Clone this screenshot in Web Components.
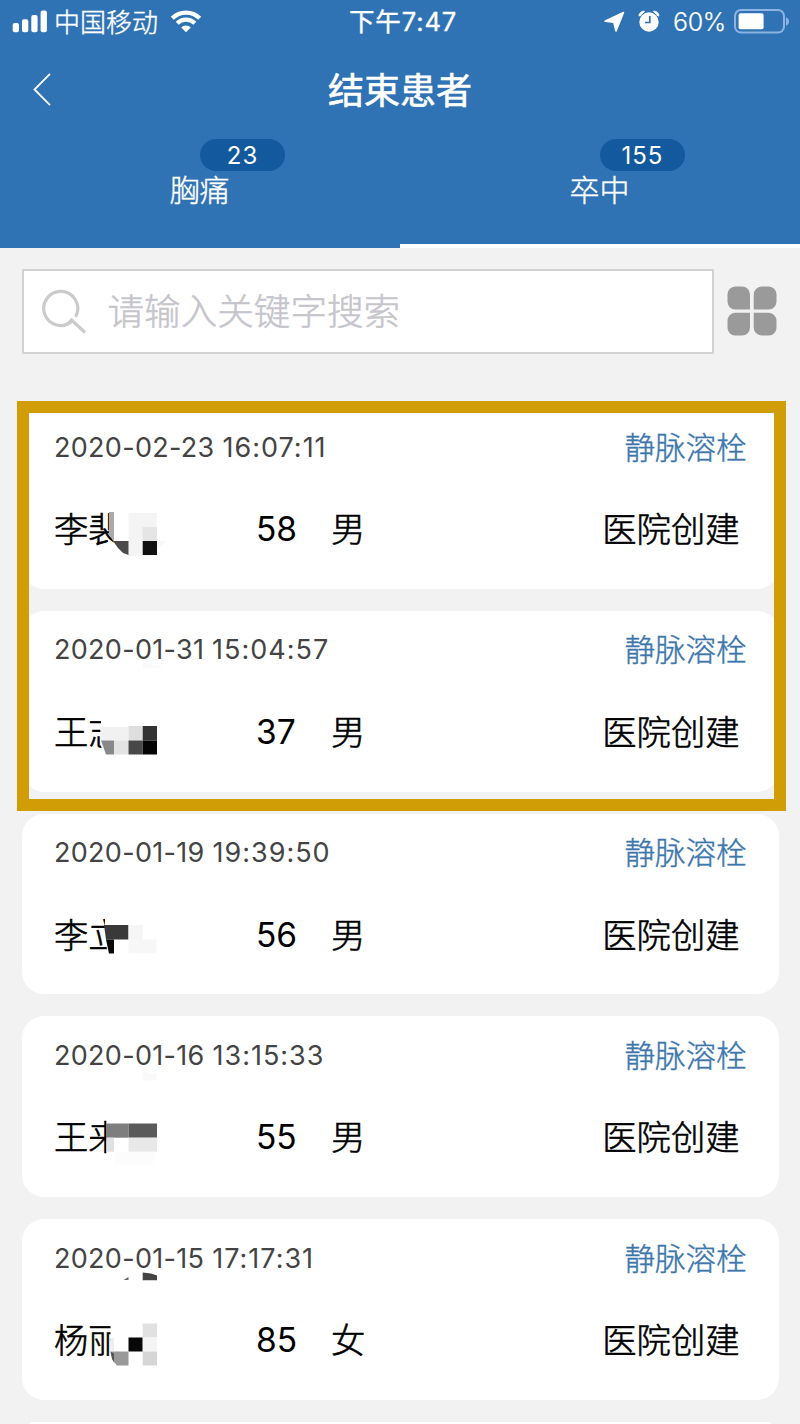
<!DOCTYPE html>
<html lang="zh-CN">
<head>
<meta charset="utf-8">
<title>结束患者</title>
<style>
    body {
        margin: 0;
        width: 800px;
        height: 1424px;
        overflow: hidden;
        background: #f2f2f2;
        font-family: Inter, "Noto Sans CJK SC", sans-serif;
    }
</style>
</head>
<body>
<patient-app></patient-app>

<script>
function makeTemplate(html) {
	const template = document.createElement("template");
	template.innerHTML = html;
	return template;
}

class BaseElement extends HTMLElement {
	constructor(template) {
		super();
		this.attachShadow({ mode: "open" });
		this.shadowRoot.appendChild(template.content.cloneNode(true));
	}
}

const statusTemplate = makeTemplate(`
<style>
    :host {
        display: grid;
        grid-template-columns: 1fr auto 1fr;
        align-items: start;
        height: 44px;
        padding: 0 11px 0 12px;
        color: #fff;
        font-size: 26px;
        line-height: 44px;
    }
    div { display: flex; align-items: flex-start; }
    .right { justify-content: flex-end; }
    svg { display: block; flex: none; }
    .carrier {
        margin: 1px 12px 0 6px;
        font-weight: 300;
        -webkit-text-stroke: 0.4px;
    }
    .time { font-size: 25.5px; padding-left: 5px; letter-spacing: 0.9px; -webkit-text-stroke: 0.4px; }
    .percent { font-size: 25px; font-weight: 300; margin: 0 7px 0 13px; letter-spacing: -0.3px; -webkit-text-stroke: 0.2px; }
    .alarm { margin-left: 13px; }
</style>
<div>
    <svg width="36" height="44" viewBox="0 0 36 44" fill="#fff">
        <rect x="0.7" y="23" width="6.3" height="9.3" rx="2"/>
        <rect x="10" y="19.3" width="6.3" height="13" rx="2"/>
        <rect x="19.3" y="15" width="6.3" height="17.3" rx="2"/>
        <rect x="28.6" y="10.5" width="6.3" height="21.8" rx="2"/>
    </svg>
    <span class="carrier">中国移动</span>
    <svg width="32" height="44" viewBox="0 0 32 44" fill="none" stroke="#fff" stroke-width="4.2">
        <path d="M2.3 18.3A19.2 19.2 0 0 1 29.7 18.3"/>
        <path d="M7.2 23.3A12.4 12.4 0 0 1 24.8 23.3"/>
        <path d="M16 32.2L11.2 27.6A6.6 6.6 0 0 1 20.8 27.6Z" fill="#fff" stroke="none"/>
    </svg>
</div>
<div class="time">下午7:47</div>
<div class="right">
    <svg width="21" height="44" viewBox="0 0 21 44" fill="#fff" stroke="#fff" stroke-linejoin="round">
        <path d="M1 21.2L19.5 12.5L12 31L9.8 22.3Z" stroke-width="1.6"/>
    </svg>
    <svg class="alarm" width="22" height="44" viewBox="0 0 22 44" fill="#fff">
        <circle cx="11" cy="22" r="9.7"/>
        <path d="M1 15.5A5 5 0 0 1 6.5 11.2L1.7 16.2ZM21 15.5A5 5 0 0 0 15.5 11.2L20.3 16.2Z" stroke="#fff"/>
        <path d="M11.8 16V22.5H7" fill="none" stroke="#2f73b4" stroke-width="1.7"/>
    </svg>
    <span class="percent">60%</span>
    <svg width="56" height="44" viewBox="0 0 56 44">
        <rect x="2" y="10" width="49" height="22.6" rx="6" fill="none" stroke="#8db5e3" stroke-width="2"/>
        <rect x="5.6" y="13.3" width="25" height="16" rx="2" fill="#fff"/>
        <path d="M53 17.2Q56 18.5 56 21.5Q56 24.5 53 25.8Z" fill="#8db5e3"/>
    </svg>
</div>
`);

class StatusBar extends BaseElement {
	constructor() {
		super(statusTemplate);
	}
}

const navTemplate = makeTemplate(`
<style>
    :host {
        display: grid;
        grid-template-columns: 80px 1fr 80px;
        align-items: center;
        height: 92px;
        color: #fff;
    }
    svg { display: block; margin-left: 32px; }
    h1 {
        margin: 2px 0 0;
        text-align: center;
        font-size: 36px;
        font-weight: 400;
        line-height: 90px;
        -webkit-text-stroke: 0.6px;
    }
</style>
<svg width="20" height="34" viewBox="0 0 20 34" fill="none" stroke="#fff" stroke-width="1.8">
    <path d="M18 0.8L2.5 16.5L18 32.2"/>
</svg>
<h1><slot></slot></h1>
`);

class NavBar extends BaseElement {
	constructor() {
		super(navTemplate);
	}
}

const tabTemplate = makeTemplate(`
<style>
    :host {
        display: flex;
        flex-direction: column;
        align-items: center;
        box-sizing: border-box;
        flex: 1;
        height: 111.5px;
        padding-top: 3px;
        color: #fff;
        border-bottom: 4px solid transparent;
    }
    :host([active]) { border-bottom-color: #fff; }
    .badge {
        width: 85px;
        height: 32px;
        margin-left: 85px;
        border-radius: 16px;
        background: #13599d;
        font-size: 24px;
        letter-spacing: 1px;
        line-height: 33px;
        text-align: center;
    }
    .label {
        font-size: 30px;
        line-height: 39px;
        font-weight: 300;
        margin-right: 1px;
        -webkit-text-stroke: 0.4px;
    }
</style>
<div class="badge"></div>
<div class="label"><slot></slot></div>
`);

class TabItem extends BaseElement {
	constructor() {
		super(tabTemplate);
		this.shadowRoot.querySelector(".badge").textContent = this.getAttribute("count");
	}
}

const searchTemplate = makeTemplate(`
<style>
    :host {
        display: flex;
        align-items: center;
        gap: 13px;
        padding: 21.5px 23px 0 22px;
    }
    .box {
        display: flex;
        align-items: center;
        box-sizing: border-box;
        width: 692px;
        height: 85px;
        padding-left: 18px;
        border: 2px solid #d2d2d2;
        background: #fff;
        color: #c5c5cb;
        font-size: 36.6px;
        font-weight: 300;
        line-height: 81px;
        -webkit-text-stroke: 0.5px;
    }
    .box svg { margin-right: 19.5px; }
    .box span { padding-top: 2px; }
    svg { display: block; flex: none; }
    .grid { margin-bottom: 2px; }
</style>
<div class="box">
    <svg width="46" height="46" viewBox="0 0 46 46" fill="none" stroke="#cbcbcb" stroke-width="3.2" stroke-linecap="round">
        <path d="M34.2 26.5A17 17 0 1 0 30.2 32"/>
        <path d="M29.5 31L42 42.5"/>
        <path d="M29.5 31L27.5 33.2"/>
    </svg>
    <span><slot></slot></span>
</div>
<svg class="grid" width="50" height="50" viewBox="0 0 50 50" fill="#9a9a9a">
    <path d="M8 0.5H15A8 8 0 0 1 23 8.5V23.5H8A8 8 0 0 1 0.5 16V8A8 8 0 0 1 8 0.5Z"/>
    <path d="M34.5 0.5H42A8 8 0 0 1 49.5 8V16A8 8 0 0 1 42 23.5H26.7V8.5A8 8 0 0 1 34.5 0.5Z"/>
    <path d="M8 26.7H23V41.5A8 8 0 0 1 15 49.5H8A8 8 0 0 1 0.5 42V34.5A8 8 0 0 1 8 26.7Z"/>
    <path d="M26.7 26.7H42A8 8 0 0 1 49.5 34.5V42A8 8 0 0 1 42 49.5H34.5A8 8 0 0 1 26.7 41.5Z"/>
</svg>
`);

class SearchBar extends BaseElement {
	constructor() {
		super(searchTemplate);
	}
}

const cardTemplate = makeTemplate(`
<style>
    :host {
        display: block;
        position: relative;
        box-sizing: border-box;
        height: 180.75px;
        padding: 16px 32px 0 32.5px;
        border-radius: 22px;
        background: #fff;
        color: #000;
    }
    .row { display: flex; align-items: center; }
    .top { justify-content: space-between; height: 46px; }
    .date { color: #444; font-size: 27px; letter-spacing: 0.3px; }
    .date span { letter-spacing: 1px; }
    .tag {
        color: #3b76ac;
        font-size: 30.5px;
        font-weight: 300;
        margin-bottom: 3px;
        -webkit-text-stroke: 0.4px;
    }
    .bottom {
        height: 60px;
        margin-top: 29px;
        font-size: 34.3px;
        font-weight: 300;
        -webkit-text-stroke: 0.6px;
    }
    .name, .sex, .from { margin-bottom: 4px; }
    .name { width: 202px; }
    .age { width: 75px; font-size: 33.5px; font-weight: 400; -webkit-text-stroke: 0; }
    .from { margin-left: auto; margin-right: 7px; }
    /* mosaic that hides the rest of the name */
    .mask { position: absolute; left: 0; top: 0; }
</style>
<div class="row top"><div class="date"></div><span class="tag"></span></div>
<div class="row bottom">
    <span class="name"></span>
    <span class="age"></span>
    <span class="sex"></span>
    <span class="from"></span>
</div>
<svg class="mask" width="180" height="180"></svg>
`);

// mosaic shapes in card coordinates: [points, fill]
const masks = {
	a: [
		["87,104 150,104 150,150 105,150 92,134 87,125", "#fff"],
		["87,104 92,104 92,134 87,127", "#aaa"],
		["106.5,105 135,105 135,148 106.5,148", "#f4f4f4"],
		["120.7,119 135,119 135,133 120.7,133", "#e5e5e5"],
		["91,133 106.5,133 106.5,147 101,145 96,140", "#4b4b4b"],
		["120.7,133 135,133 135,147 120.7,147", "#101010"],
		["135,133 145,133 135,142", "#f9f9f9"]
	],
	b: [
		["79,100 150,100 150,150 84,150 79,135", "#fff"],
		["78,116 106.5,116 106.5,129.5 79,129.5", "#f1f1f1"],
		["106.5,115 120.7,115 120.7,129.5 106.5,129.5", "#dedede"],
		["120.7,115 135,115 135,129.5 120.7,129.5", "#333"],
		["79,129.5 92,129.5 92,143.5 84,143.5", "#888"],
		["92,129.5 106.5,129.5 106.5,143.5 92,143.5", "#e3e3e3"],
		["106.5,129.5 120.7,129.5 120.7,143.5 106.5,143.5", "#484848"],
		["120.7,129.5 135,129.5 135,143.5 120.7,143.5", "#040404"],
		["121,52 139,55 139,57.5 121,57", "#fafafa"]
	],
	c: [
		["83,100 150,100 150,150 86,150 83,111", "#fff"],
		["82,111 106.5,111 106.5,125.5 84,125.5", "#393939"],
		["84,125.5 92,125.5 92,139.5 87,139.5", "#080808"],
		["106.5,111 120.7,111 120.7,125.5 106.5,125.5", "#f5f5f5"],
		["106.5,125.5 134.5,125.5 134.5,139.5 106.5,139.5", "#f7f7f7"]
	],
	d: [
		["84.5,98 150,98 150,150 84.5,150", "#fff"],
		["84,107.5 106.5,107.5 106.5,121.7 84,121.7", "#7e7e7e"],
		["106.5,107.5 135,107.5 135,121.7 106.5,121.7", "#5a5a5a"],
		["84.5,121.7 92,121.7 92,135.7 84.5,135.7", "#e1e1e1"],
		["106.5,121.7 135,121.7 135,135.7 106.5,135.7", "#e8e8e8"],
		["93,136 134,136 130,149 93,149", "#fcfcfc"],
		["120.7,55.5 134.5,58 134.5,64.5 120.7,64.5", "#f9f9f9"]
	],
	e: [
		["88.5,98 150,98 150,150 95,150 88.5,135", "#fff"],
		["88.5,119 92,119 92,132 88.5,132", "#eee"],
		["106.5,118.5 120.7,118.5 120.7,132.5 106.5,132.5", "#080808"],
		["120.7,104.5 135,104.5 135,118.5 120.7,118.5", "#e1e1e1"],
		["120.7,118.5 135,118.5 135,132.5 120.7,132.5", "#f4f4f4"],
		["120.7,132.5 135,132.5 135,146.5 120.7,146.5", "#d6d6d6"],
		["88.5,132.5 106.5,132.5 106.5,146.5 95,146.5 91,142", "#999"],
		["88.5,132.5 92,134.5 92,143 90,140", "#555"],
		["101.5,61 106.5,58 106.5,61", "#666"],
		["120.7,53.5 129,54.5 135,56.5 135,61.2 120.7,61.2", "#444"]
	]
};

class PatientCard extends BaseElement {
	constructor() {
		super(cardTemplate);
		for (const key of ["tag", "name", "age", "sex", "from"]) {
			this.shadowRoot.querySelector("." + key).textContent = this.getAttribute(key);
		}
		const [day, time] = this.getAttribute("date").split(" ");
		if (time) {
			this.shadowRoot.querySelector(".date").innerHTML = `${day} <span>${time}</span>`;
		}
		const shapes = masks[this.getAttribute("mask")] || [];
		this.shadowRoot.querySelector(".mask").innerHTML = shapes
			.map(([points, fill]) => `<polygon points="${points}" fill="${fill}"/>`)
			.join("");
	}
}

const appTemplate = makeTemplate(`
<style>
    :host { display: block; height: 1424px; overflow: hidden; }
    header {
        box-sizing: border-box;
        height: 247.5px;
        background: #2f73b4;
    }
    .tabs { display: flex; }
    .list {
        display: flex;
        flex-direction: column;
        gap: 22px;
        position: relative;
        box-sizing: border-box;
        height: 1016px;
        margin-top: 54px;
        padding: 0 21.5px;
    }
    patient-card { flex: none; z-index: 0; }
    /* only the top edge of the next card shows */
    patient-card.last {
        height: 2.2px;
        padding: 0;
        margin: 0 8px;
        border-radius: 8px 8px 0 0;
        overflow: hidden;
    }
    /* marker drawn over the first two cards */
    .marker {
        position: absolute;
        z-index: 1;
        box-sizing: border-box;
        left: 16.5px;
        top: -7px;
        width: 769.5px;
        height: 410px;
        border: 12.5px solid #d19d06;
    }
    .fill { position: absolute; left: 29px; top: 0; width: 744px; height: 30px; background: #fff; }
</style>
<header>
    <status-bar></status-bar>
    <nav-bar>结束患者</nav-bar>
    <div class="tabs">
        <tab-item count="23">胸痛</tab-item>
        <tab-item count="155" active>卒中</tab-item>
    </div>
</header>
<search-bar>请输入关键字搜索</search-bar>
<div class="list">
    <div class="fill"></div>
</div>
`);

const patients = [
	["2020-02-23 16:07:11", "李裴", "58", "男", "a"],
	["2020-01-31 15:04:57", "王志", "37", "男", "b"],
	["2020-01-19 19:39:50", "李立", "56", "男", "c"],
	["2020-01-16 13:15:33", "王来", "55", "男", "d"],
	["2020-01-15 17:17:31", "杨丽", "85", "女", "e"],
	["", "", "", "", ""]
];

class PatientApp extends BaseElement {
	constructor() {
		super(appTemplate);
		const list = this.shadowRoot.querySelector(".list");
		list.innerHTML += patients
			.map(([date, name, age, sex, mask]) => `
<patient-card class="${date ? "" : "last"}" date="${date}" name="${name}" age="${age}" sex="${sex}" mask="${mask}"
    tag="${date && "静脉溶栓"}" from="${date && "医院创建"}"></patient-card>`)
			.join("");
		list.innerHTML += `<div class="marker"></div>`;
	}
}

customElements.define("status-bar", StatusBar);
customElements.define("nav-bar", NavBar);
customElements.define("tab-item", TabItem);
customElements.define("search-bar", SearchBar);
customElements.define("patient-card", PatientCard);
customElements.define("patient-app", PatientApp);
</script>
</body>
</html>
